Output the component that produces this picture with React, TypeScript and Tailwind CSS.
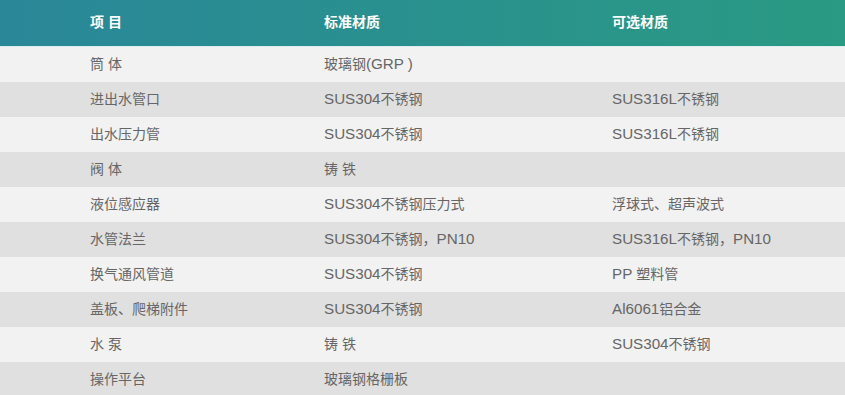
import React from "react";

const rows: [string, string, string][] = [
  ["筒 体", "玻璃钢(GRP )", ""],
  ["进出水管口", "SUS304不锈钢", "SUS316L不锈钢"],
  ["出水压力管", "SUS304不锈钢", "SUS316L不锈钢"],
  ["阀 体", "铸 铁", ""],
  ["液位感应器", "SUS304不锈钢压力式", "浮球式、超声波式"],
  ["水管法兰", "SUS304不锈钢，PN10", "SUS316L不锈钢，PN10"],
  ["换气通风管道", "SUS304不锈钢", "PP 塑料管"],
  ["盖板、爬梯附件", "SUS304不锈钢", "Al6061铝合金"],
  ["水 泵", "铸 铁", "SUS304不锈钢"],
  ["操作平台", "玻璃钢格栅板", ""],
];

function Txt({ s }: { s: string }) {
  const parts = s.split(/([A-Za-z0-9()]+)/).filter((p) => p.length > 0);
  return (
    <>
      {parts.map((p, i) =>
        /^[A-Za-z0-9()]+$/.test(p) ? (
          <span key={i} className="text-[15.2px]">
            {p}
          </span>
        ) : (
          <span key={i}>{p}</span>
        )
      )}
    </>
  );
}

export default function App() {
  return (
    <div
      className="w-[845px] h-[395px] overflow-hidden bg-[#f2f2f2]"
      style={{ fontFamily: '"Liberation Sans", "Noto Sans CJK SC", sans-serif' }}
    >
      <div className="h-[46px] pb-[2px] flex items-center bg-gradient-to-r from-[#2a8798] to-[#2a9a83] text-white text-[14px] font-bold">
        <div className="w-[324px] pl-[90px]">项 目</div>
        <div className="w-[288px]">标准材质</div>
        <div className="flex-1">可选材质</div>
      </div>
      <div className="h-px bg-[#dcefee]" />
      {rows.map((r, i) => (
        <div
          key={i}
          className={`h-[35px] pb-[2px] flex items-center text-[14px] leading-[20px] text-[#666666] ${
            i % 2 === 0 ? "bg-[#f2f2f2]" : "bg-[#e0e0e0]"
          }`}
        >
          <div className="w-[324px] pl-[90px]">
            <Txt s={r[0]} />
          </div>
          <div className="w-[288px]">
            <Txt s={r[1]} />
          </div>
          <div className="flex-1">
            <Txt s={r[2]} />
          </div>
        </div>
      ))}
    </div>
  );
}
